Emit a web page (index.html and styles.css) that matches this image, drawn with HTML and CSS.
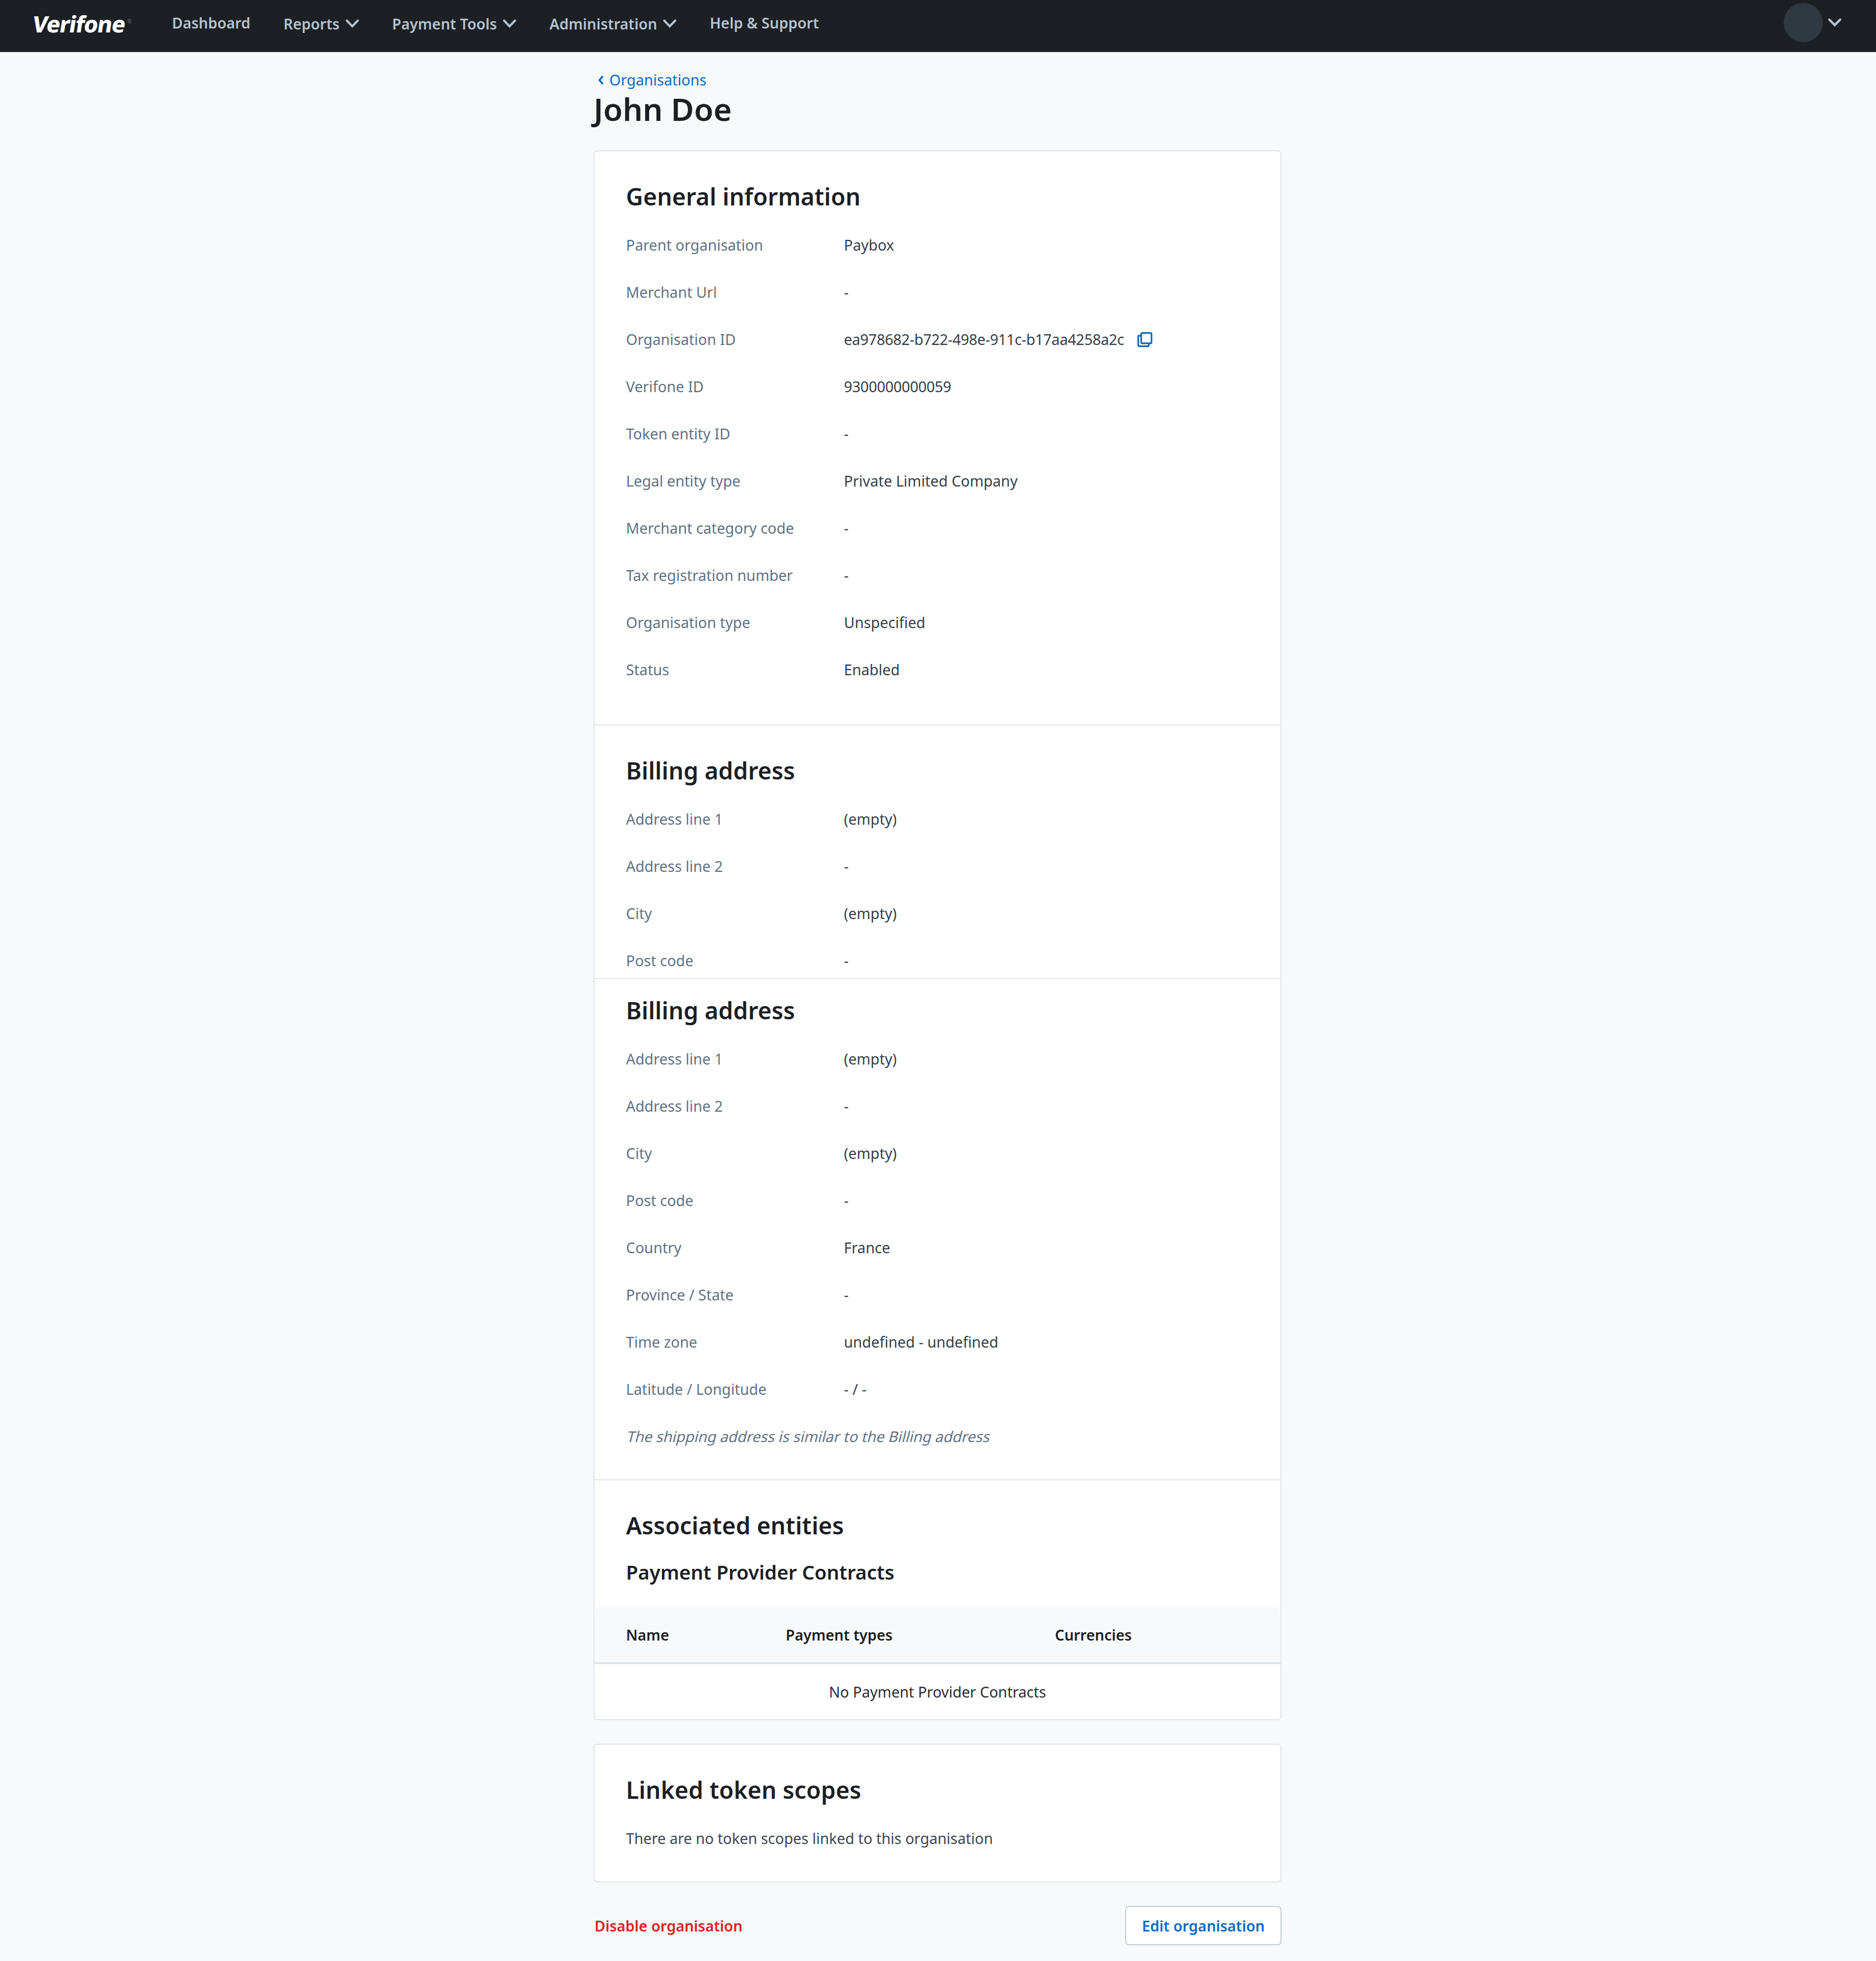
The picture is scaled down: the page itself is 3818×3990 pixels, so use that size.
FILE: index.html
```
<!DOCTYPE html>
<html lang="en">
<head>
    <meta charset="UTF-8">
    <meta name="viewport" content="width=device-width, initial-scale=1.0">
    <title>John Doe | Organisations | Verifone</title>
    <link rel="stylesheet" href="styles.css">
</head>
<body>
    <header class="topbar">
        <a class="logo"><span class="wordmark">Verifone</span><sup class="reg">®</sup></a>
        <nav class="nav">
            <a class="nav-link">Dashboard</a>
            <a class="nav-link has-menu">Reports
                <svg class="chevron" viewBox="0 0 28 18"><path d="M3 3l11 11.5L25 3"/></svg>
            </a>
            <a class="nav-link has-menu">Payment Tools
                <svg class="chevron" viewBox="0 0 28 18"><path d="M3 3l11 11.5L25 3"/></svg>
            </a>
            <a class="nav-link has-menu">Administration
                <svg class="chevron" viewBox="0 0 28 18"><path d="M3 3l11 11.5L25 3"/></svg>
            </a>
            <a class="nav-link">Help &amp; Support</a>
        </nav>
        <div class="account">
            <span class="avatar"></span>
            <svg class="chevron" viewBox="0 0 28 18"><path d="M3 3l11 11L25 3"/></svg>
        </div>
    </header>

    <main class="page">
        <a class="back">
            <svg class="back-icon" viewBox="0 0 12 20"><path d="M10 2L3 10l7 8"/></svg>
            Organisations
        </a>
        <h1>John Doe</h1>

        <div class="card">
            <section class="section">
                <h2>General information</h2>
                <dl>
                    <div class="row"><dt>Parent organisation</dt><dd>Paybox</dd></div>
                    <div class="row"><dt>Merchant Url</dt><dd>-</dd></div>
                    <div class="row">
                        <dt>Organisation ID</dt>
                        <dd><span class="digits">ea978682-b722-498e-911c-b17aa4258a2c</span>
                            <svg class="copy" viewBox="0 0 32 32"><rect x="8.5" y="2.5" width="21" height="21" rx="2"/><path d="M8.5 8H4.5Q2.5 8 2.5 10V27.5Q2.5 29.5 4.5 29.5H22Q24 29.5 24 27.5V24"/></svg>
                        </dd>
                    </div>
                    <div class="row"><dt>Verifone ID</dt><dd><span class="digits">9300000000059</span></dd></div>
                    <div class="row"><dt>Token entity ID</dt><dd>-</dd></div>
                    <div class="row"><dt>Legal entity type</dt><dd>Private Limited Company</dd></div>
                    <div class="row"><dt>Merchant category code</dt><dd>-</dd></div>
                    <div class="row"><dt>Tax registration number</dt><dd>-</dd></div>
                    <div class="row"><dt>Organisation type</dt><dd>Unspecified</dd></div>
                    <div class="row"><dt>Status</dt><dd>Enabled</dd></div>
                </dl>
            </section>

            <section class="section section-clipped">
                <h2>Billing address</h2>
                <dl>
                    <div class="row"><dt>Address line 1</dt><dd>(empty)</dd></div>
                    <div class="row"><dt>Address line 2</dt><dd>-</dd></div>
                    <div class="row"><dt>City</dt><dd>(empty)</dd></div>
                    <div class="row"><dt>Post code</dt><dd>-</dd></div>
                </dl>
            </section>

            <section class="section section-address">
                <h2>Billing address</h2>
                <dl>
                    <div class="row"><dt>Address line 1</dt><dd>(empty)</dd></div>
                    <div class="row"><dt>Address line 2</dt><dd>-</dd></div>
                    <div class="row"><dt>City</dt><dd>(empty)</dd></div>
                    <div class="row"><dt>Post code</dt><dd>-</dd></div>
                    <div class="row"><dt>Country</dt><dd>France</dd></div>
                    <div class="row"><dt>Province / State</dt><dd>-</dd></div>
                    <div class="row"><dt>Time zone</dt><dd>undefined - undefined</dd></div>
                    <div class="row"><dt>Latitude / Longitude</dt><dd>- / -</dd></div>
                </dl>
                <p class="note"><span class="slanted">The shipping address is similar to the Billing address</span></p>
            </section>

            <section class="section section-entities">
                <h2>Associated entities</h2>
                <h3>Payment Provider Contracts</h3>
            </section>
            <div class="table">
                <div class="table-head">
                    <span>Name</span>
                    <span>Payment types</span>
                    <span>Currencies</span>
                </div>
                <div class="table-empty">No Payment Provider Contracts</div>
            </div>
        </div>

        <div class="card">
            <section class="section section-tokens">
                <h2>Linked token scopes</h2>
                <p class="text">There are no token scopes linked to this organisation</p>
            </section>
        </div>

        <div class="actions">
            <button class="btn-danger">Disable organisation</button>
            <button class="btn-outline">Edit organisation</button>
        </div>
    </main>
</body>
</html>
```
FILE: styles.css
```
* {
    margin: 0;
    padding: 0;
    box-sizing: border-box;
}

body {
    font-family: "Noto Sans", sans-serif;
    font-size: 30px;
    line-height: 44px;
    background: #f8f9fb;
    color: #1c1f24;
}

/* Top bar */
.topbar {
    display: flex;
    align-items: flex-start;
    height: 106px;
    padding: 0 70px 0 67px;
    background: #1c1f24;
    border-bottom: 1px solid #3a444c;
}

.logo {
    display: flex;
    width: 283px;
    padding-top: 17px;
    color: #fff;
    font-size: 46px;
    font-weight: 800;
    line-height: 62px;
}

.wordmark {
    width: 192px;
    letter-spacing: -1.4px;
    transform: skewX(-9deg);
}

.reg {
    color: #70757b;
    font-family: "Liberation Sans", sans-serif;
    font-size: 12px;
    font-weight: 400;
    line-height: 54px;
}

.nav {
    display: flex;
    gap: 67.5px;
    padding-top: 25px;
}

.nav-link {
    display: flex;
    color: #b6c2cd;
    font-weight: 600;
    white-space: nowrap;
}

.has-menu {
    padding-top: 2px;
}

.chevron {
    width: 28px;
    height: 18px;
    fill: none;
    stroke: #b6c2cd;
    stroke-width: 4.6;
    stroke-linecap: round;
    stroke-linejoin: miter;
}

.has-menu .chevron {
    margin: 12px 0 0 11.5px;
}

.account {
    display: flex;
    align-items: center;
    gap: 10px;
    margin-left: auto;
    padding-top: 6px;
}

.avatar {
    width: 80px;
    height: 80px;
    border-radius: 50%;
    background: #303841;
}

/* Page */
.page {
    width: 1400px;
    margin-left: 1208px;
    padding-top: 37px;
}

.back {
    display: flex;
    align-items: center;
    height: 40px;
    padding-left: 9px;
    color: #0b6bc7;
}

.back-icon {
    width: 12px;
    height: 20px;
    margin-right: 11px;
    fill: none;
    stroke: #0b6bc7;
    stroke-width: 3.8;
}

h1 {
    font-size: 64px;
    font-weight: 600;
    line-height: 78px;
    margin-bottom: 45px;
}

h2 {
    font-size: 48px;
    font-weight: 600;
    line-height: 64px;
    letter-spacing: 0.1px;
}

h3 {
    margin-top: 36px;
    font-size: 40px;
    font-weight: 600;
    line-height: 54px;
}

.card {
    margin-bottom: 48px;
    background: #fff;
    border: 2px solid #dfe3e8;
    border-radius: 8px;
}

.section {
    padding: 60px 64px 63px;
}

.section + .section {
    border-top: 2px solid #dfe3e8;
}

.section h2 + dl,
.section h2 + .text {
    margin-top: 19px;
}

.section-clipped {
    height: 516px;
    padding-bottom: 0;
    overflow: hidden;
}

.section-address {
    padding-top: 32px;
    padding-bottom: 39px;
}

.section-entities {
    padding-bottom: 44px;
}

.section-tokens {
    padding-bottom: 39px;
}

.row {
    display: flex;
    align-items: center;
    height: 96px;
}

dt {
    width: 443.5px;
    color: #5f7283;
}

dd {
    display: flex;
    align-items: center;
    color: #363f48;
}

.digits {
    letter-spacing: -0.36px;
}

.copy {
    width: 32px;
    height: 32px;
    margin-left: 26px;
    fill: none;
    stroke: #0b6bc7;
    stroke-width: 3.4;
}

.note,
.text {
    height: 96px;
    line-height: 96px;
}

.note {
    color: #5f7283;
}

.slanted {
    display: inline-block;
    transform: skewX(-14deg);
    transform-origin: 0 60px;
}

.text {
    color: #3c4650;
}

/* Contracts table */
.table-head {
    display: grid;
    grid-template-columns: 325px 548px 1fr;
    align-items: center;
    height: 116px;
    padding: 1px 64px 0;
    background: #f8f9fb;
    border-bottom: 4px solid #dde3e8;
    border-radius: 10px 10px 0 0;
    font-weight: 600;
}

.table-empty {
    height: 112px;
    line-height: 113px;
    text-align: center;
    color: #2a2e34;
}

/* Footer actions */
.actions {
    display: flex;
    align-items: center;
    justify-content: space-between;
}

button {
    font: inherit;
    font-weight: 600;
    background: none;
    border: none;
}

.btn-danger {
    padding: 1px 0 0 2px;
    color: #de2222;
}

.btn-outline {
    width: 318px;
    height: 80px;
    padding-top: 1px;
    color: #0b6bc7;
    background: #fff;
    border: 2px solid #c1cad2;
    border-radius: 8px;
}
```
